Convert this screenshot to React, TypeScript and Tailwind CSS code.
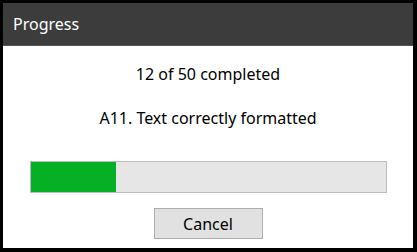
export default function App() {
  const done = 12;
  const total = 50;
  const pct = (done / total) * 100;

  return (
    <div className="h-[252px] w-[417px] bg-black pt-[3px] pl-[3px] pr-[4px] pb-[4px] font-['Segoe_UI','Noto_Sans',sans-serif]">
      <div className="flex h-full flex-col">
        {/* title bar */}
        <div className="flex h-[43px] items-center border-b border-[#555] bg-[#3c3c3c] pl-[10px] text-[16px] text-white">
          Progress
        </div>

        {/* body */}
        <div className="flex flex-1 flex-col items-center bg-white">
          <p className="mt-[17px] text-[16px] leading-[22px] text-black">
            {done} of {total} completed
          </p>
          <p className="mt-[22px] text-[16px] leading-[22px] text-black">
            A11. Text correctly formatted
          </p>

          <div className="mt-[32px] ml-[27px] h-[32px] w-[357px] self-start border border-[#bcbcbc] bg-[#e6e6e6]">
            <div className="h-full bg-[#06b025]" style={{ width: `${pct}%` }} />
          </div>

          <button className="mt-[15px] h-[31px] w-[109px] border border-[#adadad] bg-[#e1e1e1] text-[16px] text-black">
            Cancel
          </button>
        </div>
      </div>
    </div>
  );
}
